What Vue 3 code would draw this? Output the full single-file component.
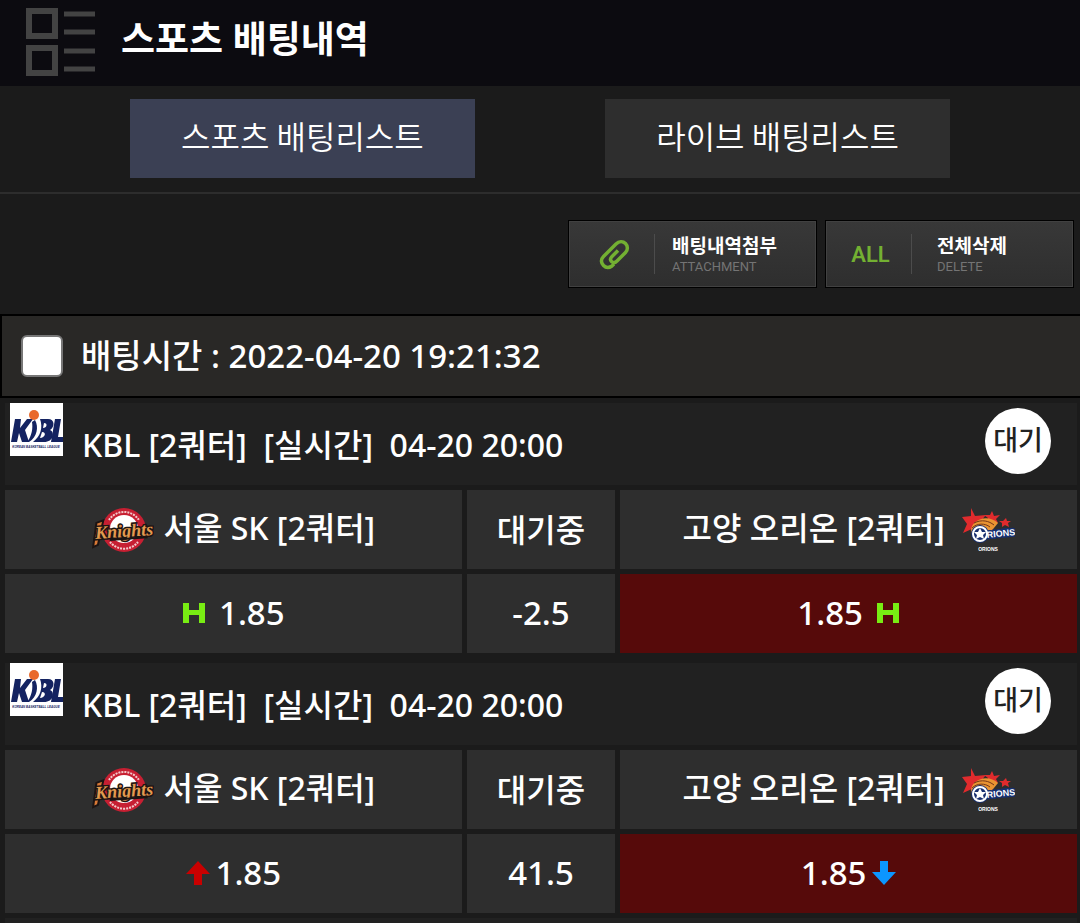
<template>
  <main class="page">
    <header class="header">
      <svg class="header-icon" viewBox="0 0 69 68" aria-hidden="true">
        <g fill="none" stroke="#434343" stroke-width="6">
          <rect x="3" y="3" width="26" height="25" />
          <rect x="3" y="40" width="26" height="25" />
          <path d="M38 6h31M38 24h31M38 43h31M38 61h31" stroke-width="5" />
        </g>
      </svg>
      <h1>스포츠 배팅내역</h1>
    </header>

    <nav class="tabs">
      <button
        v-for="tab in tabs"
        :key="tab"
        type="button"
        class="tab"
        :class="{ active: tab === activeTab }"
        @click="activeTab = tab"
      >
        {{ tab }}
      </button>
    </nav>

    <div class="actions">
      <button type="button" class="action">
        <span class="action-icon">
          <svg viewBox="0 0 32 32" width="32" height="32" aria-hidden="true">
            <path
              d="M16 26l-2 2c-3 2-6 2-8.500-.5s-3-6 0-9L18 6c3-3 7-3 9.500-.5s2.500 6.500 0 9L19 23c-2 2-4 2-5.500 .5s-1-3.500 .5-5l6-6"
              fill="none"
              stroke="#73b032"
              stroke-width="3.500"
            />
          </svg>
        </span>
        <span class="action-text">
          <strong>배팅내역첨부</strong>
          <small>ATTACHMENT</small>
        </span>
      </button>
      <button type="button" class="action delete">
        <span class="action-icon">ALL</span>
        <span class="action-text">
          <strong>전체삭제</strong>
          <small>DELETE</small>
        </span>
      </button>
    </div>

    <label class="bet-time">
      <input v-model="checked" type="checkbox" />
      <span>배팅시간 : 2022-04-20 19:21:32</span>
    </label>

    <section v-for="game in games" :key="game.id" class="game">
      <div class="game-head">
        <svg class="league-logo" viewBox="0 0 53 53" aria-hidden="true">
          <rect width="53" height="53" fill="#fff" />
          <g fill="#142361">
            <path d="M5 16h6l-1 9 7-9h6l-8 11 4 12h-7l-3-9-2 9H1z" />
            <path d="M25 17c4 7 2 17-6 22h-2c5-6 6-14 5-20z" />
            <path
              d="M30 16h8c7 0 7 8 2 11 5 2 4 12-6 12H23c8-6 10-15 7-23zM34 20l-1 5c4 0 5-5 1-5zM32 29l-2 6c5 0 7-6 2-6z"
              fill-rule="evenodd"
            />
            <path d="M45 16h6l-3 18h5v5H41z" />
          </g>
          <circle cx="24" cy="12" r="5" fill="#e9692b" />
          <text x="26" y="45" class="league-caption">KOREAN BASKETBALL LEAGUE</text>
        </svg>
        <span class="game-title">KBL [2쿼터]&nbsp; [실시간]&nbsp; 04-20 20:00</span>
        <span class="badge">대기</span>
      </div>

      <table class="odds">
        <tbody>
          <tr class="teams">
            <td>
              <span class="cell">
                <svg class="knights" viewBox="0 0 62 44" aria-hidden="true">
                  <circle cx="32" cy="22" r="22" fill="#c71f32" />
                  <circle cx="32" cy="21" r="14" fill="#fff" />
                  <path
                    d="M17 12a18 18 0 0 1 30 0M18 34a18 18 0 0 0 28 0"
                    fill="none"
                    stroke="#f2c9cb"
                    stroke-width="2"
                    stroke-dasharray="2 1"
                  />
                  <g transform="rotate(-4 31 22)">
                    <path d="M5 13l7-2-7 24-5 2z" fill="#d97936" stroke="#1c1413" stroke-width="2" />
                    <text x="32" y="29" class="knights-name">Knights</text>
                    <path d="M17 31h38" stroke="#1c1413" stroke-width="2" />
                  </g>
                </svg>
                서울 SK [2쿼터]
              </span>
            </td>
            <td>대기중</td>
            <td>
              <span class="cell">
                고양 오리온 [2쿼터]
                <svg class="orions" viewBox="0 0 54 44" aria-hidden="true">
                  <g fill="#e02b2d">
                    <path d="M10 0l4 8 11-1-7 8 4 9-9-4-11 5 4-9-5-7 9-1z" />
                    <path d="M31 3l2 5 6-1-4 4 2 4-6-2-5 2 1-5-4-3 6 0z" />
                    <path d="M45 10l1 3 4 0-3 2 1 4-4-2-3 2 0-4-3-2 4 0z" />
                  </g>
                  <path d="M10 26C8 12 26 5 37 15l-9 11z" fill="#e99432" />
                  <path d="M13 15c8-4 15-2 20 2M11 20c5-5 13-5 18-1" stroke="#743719" fill="none" />
                  <circle cx="19" cy="26" r="9" fill="#172f70" />
                  <text x="26" y="30" class="orions-name" transform="rotate(-6 26 30)">RIONS</text>
                  <circle cx="19" cy="26" r="7" fill="#172f70" stroke="#fff" stroke-width="2" />
                  <path d="M19 20l2 4 4 0-3 3 1 4-4-2-4 2 1-4-3-3 4 0z" fill="#fff" />
                  <text x="27" y="43" class="orions-caption">ORIONS</text>
                </svg>
              </span>
            </td>
          </tr>
          <tr class="rates">
            <td>
              <span class="cell odd" :class="game.type">
                <svg v-if="game.type === 'handicap'" class="mark" viewBox="0 0 24 24" aria-hidden="true">
                  <path d="M1 2h6v7h10V2h6v20h-6v-8H7v8H1z" fill="#78ed13" />
                </svg>
                <svg v-else class="mark" viewBox="0 0 24 24" aria-hidden="true">
                  <path d="M12 0l12 13h-8v11H8V13H0z" fill="#c90000" />
                </svg>
                {{ game.home }}
              </span>
            </td>
            <td>{{ game.line }}</td>
            <td class="picked">
              <span class="cell odd" :class="game.type">
                {{ game.away }}
                <svg v-if="game.type === 'handicap'" class="mark" viewBox="0 0 24 24" aria-hidden="true">
                  <path d="M1 2h6v7h10V2h6v20h-6v-8H7v8H1z" fill="#78ed13" />
                </svg>
                <svg v-else class="mark" viewBox="0 0 24 24" aria-hidden="true">
                  <path d="M8 0h8v11h8L12 24 0 11h8z" fill="#0c96ff" />
                </svg>
              </span>
            </td>
          </tr>
        </tbody>
      </table>
    </section>
    <div class="list-end"></div>
  </main>
</template>

<script setup>
import { ref } from 'vue'

const tabs = ['스포츠 배팅리스트', '라이브 배팅리스트']
const activeTab = ref(tabs[0])
const checked = ref(false)

const games = [
  { id: 1, type: 'handicap', home: '1.85', line: '-2.5', away: '1.85' },
  { id: 2, type: 'total', home: '1.85', line: '41.5', away: '1.85' },
]
</script>

<style>
body {
  margin: 0;
  background: #1b1b1b;
}
</style>

<style scoped>
.page {
  background: #1b1b1b;
  color: #fff;
  font-family: 'Noto Sans', 'Noto Sans CJK KR', sans-serif;
  font-size: 32px;
  font-weight: 500;
  line-height: 40px;
}

button {
  border: 0;
  padding: 0;
  color: inherit;
  font-family: inherit;
}

.header {
  display: flex;
  align-items: center;
  gap: 26px;
  height: 86px;
  padding: 0 26px 2px;
  box-sizing: border-box;
  background: #0c0b10;
}

.header-icon {
  width: 69px;
  height: 68px;
}

h1 {
  margin: 0;
  padding-bottom: 6px;
  font-size: 37px;
  font-weight: 700;
}

.tabs {
  display: flex;
  padding: 13px 0 14px;
  border-bottom: 2px solid #2d2d2d;
}

.tab {
  width: 32%;
  height: 79px;
  margin-left: 12%;
  padding-bottom: 8px;
  background: #2e2e2e;
  font-size: 32px;
  font-weight: 350;
  font-family: 'Noto Sans CJK KR', sans-serif;
}

.tab.active {
  background: #3b4054;
}

.actions {
  display: flex;
  justify-content: flex-end;
  gap: 8px;
  padding: 26px 6px;
}

.action {
  display: flex;
  align-items: center;
  width: 249px;
  height: 68px;
  border: 1px solid #000;
  background: linear-gradient(#383838, #2e2e2e);
  box-shadow: inset 0 0 0 1px #414141;
}

.action-icon {
  display: flex;
  align-items: center;
  justify-content: center;
  width: 86px;
  height: 40px;
  border-right: 1px solid #4c4c4c;
  box-sizing: border-box;
  padding-left: 4px;
  color: #73b032;
  font: 600 22px Roboto, sans-serif;
}

.action-text {
  display: flex;
  flex-direction: column;
  padding: 2px 0 0 17px;
  text-align: left;
}

.delete .action-text {
  padding-left: 25px;
}

.action-text strong {
  font-size: 19px;
  line-height: 24px;
}

.action-text small {
  color: #747474;
  font: 13px/18px Roboto, sans-serif;
}

.bet-time {
  display: flex;
  align-items: center;
  gap: 18px;
  height: 84px;
  padding-left: 19px;
  box-sizing: border-box;
  border: solid #000;
  border-width: 2px 0 2px 2px;
  background: #292826;
  font-size: 33px;
}

.bet-time input {
  width: 42px;
  height: 42px;
  margin: 0;
  appearance: none;
  border: 2px solid #777;
  border-radius: 6px;
  background: #fff;
}

.bet-time input:checked {
  background: #73b032;
}

.game {
  padding-top: 5px;
  overflow: hidden;
}

.game-head {
  display: flex;
  align-items: flex-start;
  height: 82px;
  margin: 0 3px 0 5px;
  padding: 0 26px 0 5px;
  box-sizing: border-box;
  background: #212121;
}

.league-logo {
  width: 53px;
  height: 53px;
  flex: none;
}

.league-caption {
  fill: #142361;
  font: italic 700 3px 'Liberation Sans', sans-serif;
  text-anchor: middle;
}

.game-title {
  flex: 1;
  padding: 22px 0 0 19px;
}

.badge {
  width: 66px;
  height: 66px;
  margin-top: 5px;
  border-radius: 50%;
  background: #fff;
  color: #222;
  font-size: 27px;
  line-height: 64px;
  text-align: center;
}

.odds {
  width: calc(100% + 2px);
  table-layout: fixed;
  border-collapse: separate;
  border-spacing: 5px;
}

.odds td {
  height: 79px;
  padding: 0;
  background: #2e2e2e;
  text-align: center;
}

.odds td:nth-child(2) {
  width: 14%;
}

.odds td.picked {
  background: #560a0a;
}

.rates {
  font-size: 33px;
}

.rates td {
  padding-bottom: 2px;
  box-sizing: border-box;
}

.cell {
  display: flex;
  align-items: center;
  justify-content: center;
  gap: 10px;
}

.teams .cell {
  padding-bottom: 4px;
}

.teams svg {
  margin-top: 4px;
}

.cell.handicap {
  gap: 13px;
}

.cell.total {
  gap: 6px;
}

.knights {
  width: 62px;
  height: 44px;
}

.knights-name {
  fill: #e39a4f;
  stroke: #1c1413;
  stroke-width: 3px;
  paint-order: stroke;
  font: italic 700 18px 'Liberation Serif', serif;
  text-anchor: middle;
}

.orions {
  width: 54px;
  height: 44px;
  margin-left: 6px;
}

.orions-name {
  fill: #fff;
  stroke: #172f70;
  stroke-width: 3px;
  paint-order: stroke;
  font: 700 9px 'Liberation Sans', sans-serif;
}

.orions-caption {
  fill: #fff;
  font: 700 5px 'Liberation Sans', sans-serif;
  text-anchor: middle;
}

.mark {
  width: 24px;
  height: 24px;
}

.list-end {
  height: 5px;
  margin: 0 3px 0 5px;
  background: #212121;
}
</style>
